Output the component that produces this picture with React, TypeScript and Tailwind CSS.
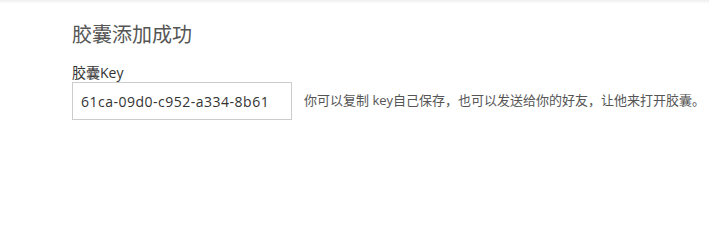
export default function App() {
  return (
    <div className="w-[709px] h-[221px] bg-white relative font-['Open_Sans','Noto_Sans_CJK_SC',sans-serif] text-[#555]">
      <div className="h-[4px] bg-gradient-to-b from-[#efefef] to-white" />
      <div className="pl-[72px] pt-[17px]">
        <h1 className="text-[20px] leading-[28px] text-[#555]">胶囊添加成功</h1>
        <div className="mt-[15px] text-[14px] leading-[18px] text-[#333]">胶囊Key</div>
        <div className="flex items-center">
          <div className="w-[220px] h-[38px] border border-[#ccc] flex items-center pl-[8px] text-[14px] tracking-[0.5px] text-[#333]">
            61ca-09d0-c952-a334-8b61
          </div>
          <span className="ml-[12px] text-[13px] text-[#555]">
            你可以复制 key自己保存，也可以发送给你的好友，让他来打开胶囊。
          </span>
        </div>
      </div>
    </div>
  );
}
